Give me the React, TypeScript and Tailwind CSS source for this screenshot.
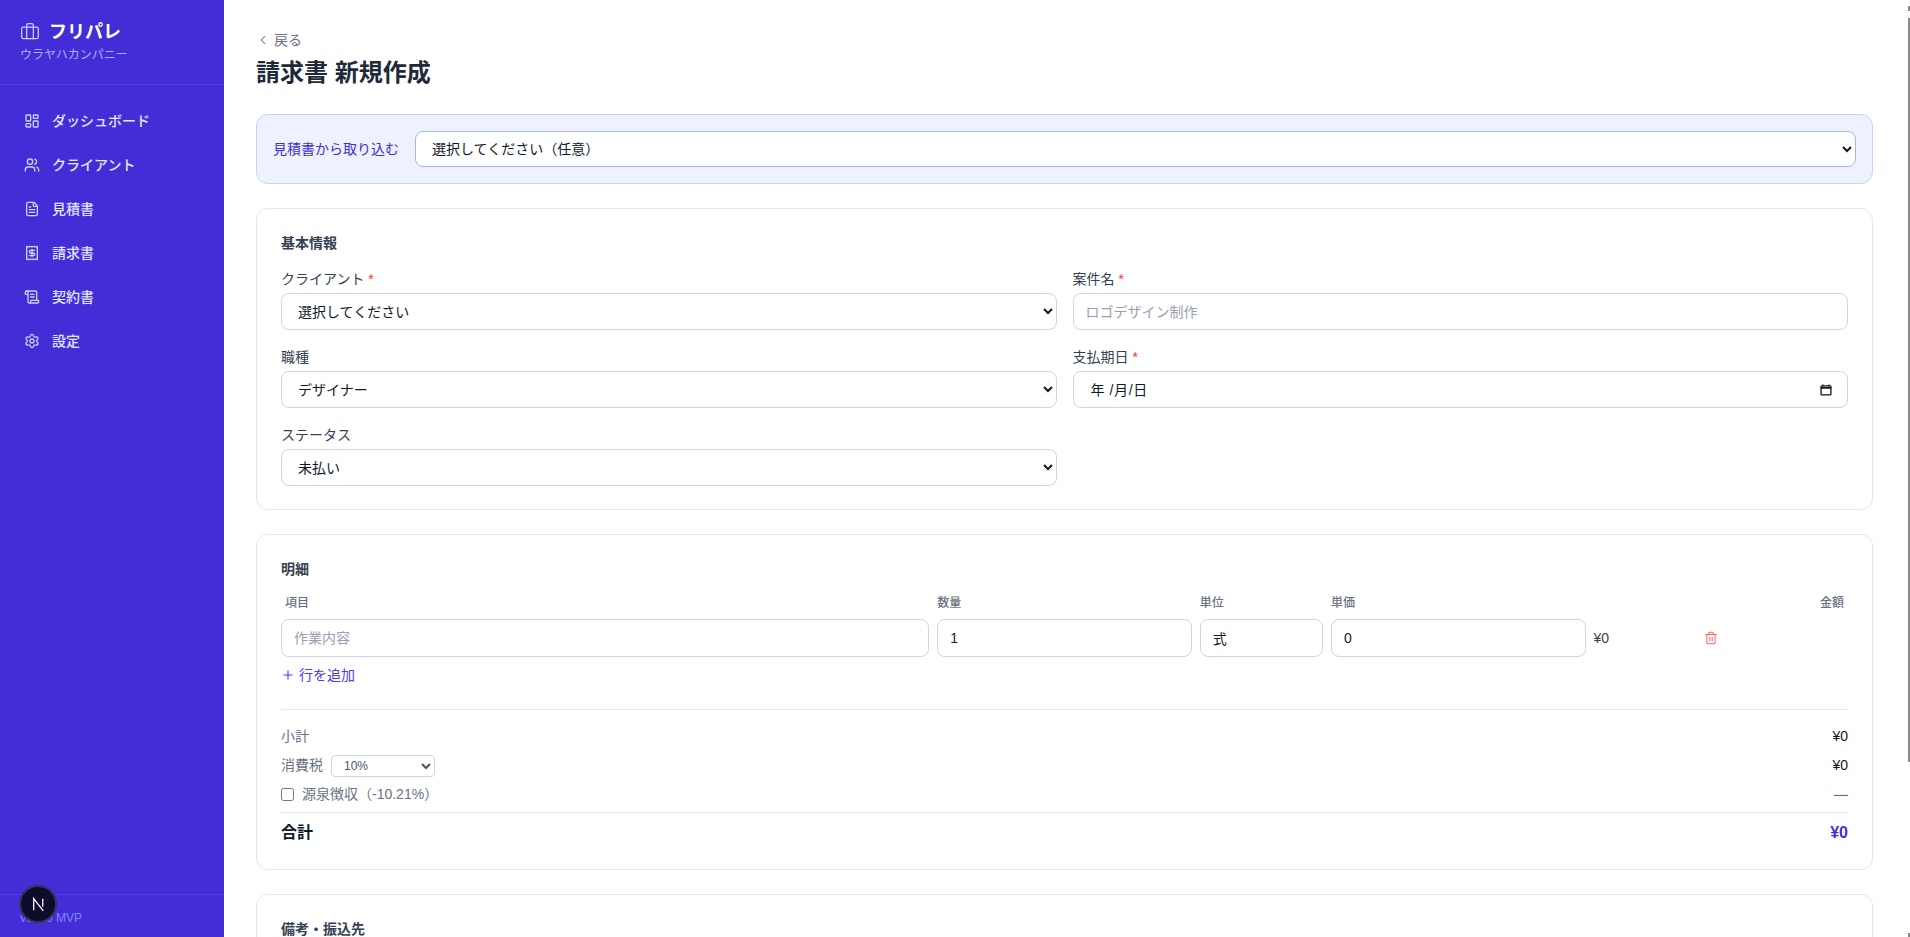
import React from 'react';
import { Briefcase, LayoutDashboard, Users, FileText, Receipt, ScrollText, Settings, ChevronLeft, Plus, Trash2 } from 'lucide-react';

const navItems = [
  { label: 'ダッシュボード', icon: LayoutDashboard },
  { label: 'クライアント', icon: Users },
  { label: '見積書', icon: FileText },
  { label: '請求書', icon: Receipt },
  { label: '契約書', icon: ScrollText },
  { label: '設定', icon: Settings },
];

const fieldClass = 'w-full h-[37px] rounded-lg border border-[#d1d5e3] bg-white px-3 text-sm text-gray-900 placeholder:text-gray-400';

const Label = ({ text, required }: { text: string; required?: boolean }) => (
  <label className="mb-1 block h-5 text-sm leading-5 text-gray-700">
    {text}
    {required && <span className="text-red-500"> *</span>}
  </label>
);

const Sidebar = () => (
  <aside className="relative flex h-full w-56 shrink-0 flex-col bg-indigo-700">
    <div className="h-[85px] shrink-0 border-b border-indigo-600 pl-5 pt-[20px]">
      <div className="flex h-6 items-center gap-[9px]">
        <Briefcase className="h-5 w-5 text-indigo-200" strokeWidth={1.5} />
        <span className="text-lg font-bold leading-6 text-white">フリパレ</span>
      </div>
      <p className="mt-[3px] text-xs leading-4 text-indigo-300">ウラヤハカンパニー</p>
    </div>
    <nav className="flex flex-1 flex-col gap-2 px-3 pt-[18px]">
      {navItems.map((item) => (
        <a key={item.label} className="flex h-9 items-center gap-3 rounded-lg px-3 text-sm font-medium text-indigo-100">
          <item.icon className="h-4 w-4 text-indigo-200" strokeWidth={2} />
          {item.label}
        </a>
      ))}
    </nav>
    <div className="h-[43px] shrink-0 border-t border-indigo-600 pl-5 pt-[15px] text-xs leading-4 text-indigo-400">v0.1.0 MVP</div>
    {/* dev indicator */}
    <div className="absolute bottom-[14px] left-[19px] flex h-[38px] w-[38px] items-center justify-center rounded-full border-2 border-[#34325a] bg-[#0e0b2b]">
      <svg viewBox="0 0 16 16" className="h-[17px] w-[17px]" fill="none" stroke="white" strokeWidth="1.2">
        <path d="M3.5 13.5V2.5l9 11.5" />
        <path d="M12 2.5v7.5" />
      </svg>
    </div>
  </aside>
);

const ImportCard = () => (
  <div className="flex h-[70px] shrink-0 items-center gap-4 rounded-xl border border-indigo-200 bg-indigo-50 px-4">
    <span className="whitespace-nowrap text-sm text-indigo-700">見積書から取り込む</span>
    <select className="h-9 flex-1 rounded-lg border border-indigo-300 bg-white px-3 text-sm text-gray-900">
      <option>選択してください（任意）</option>
    </select>
  </div>
);

const BasicInfo = () => (
  <section className="h-[302px] shrink-0 rounded-xl border border-gray-200 bg-white p-6">
    <h2 className="mb-4 h-5 text-sm font-semibold leading-5 text-gray-700">基本情報</h2>
    <div className="grid grid-cols-2 gap-x-4 gap-y-[17px]">
      <div>
        <Label text="クライアント" required />
        <select className={fieldClass}><option>選択してください</option></select>
      </div>
      <div>
        <Label text="案件名" required />
        <input className={fieldClass} placeholder="ロゴデザイン制作" />
      </div>
      <div>
        <Label text="職種" />
        <select className={fieldClass}><option>デザイナー</option></select>
      </div>
      <div>
        <Label text="支払期日" required />
        <div className={`${fieldClass} flex items-center justify-between pr-[15px]`}>
          <span className="pl-[5px] tracking-[0.6px]">年 /月/日</span>
          <svg viewBox="0 0 14 14" className="h-3 w-3" fill="none">
            <path d="M3.5 0.5v2M10.5 0.5v2" stroke="#111" strokeWidth="1.5" />
            <rect x="1.25" y="2.25" width="11.5" height="10.5" rx="1" stroke="#111" strokeWidth="1.5" />
            <path d="M1 4.5h12" stroke="#111" strokeWidth="2" />
          </svg>
        </div>
      </div>
      <div>
        <Label text="ステータス" />
        <select className={fieldClass}><option>未払い</option></select>
      </div>
    </div>
  </section>
);

const LineItems = () => (
  <section className="h-[336px] shrink-0 rounded-xl border border-gray-200 bg-white p-6">
    <h2 className="mb-4 h-5 text-sm font-semibold leading-5 text-gray-700">明細</h2>
    <div className="mb-2 grid h-4 grid-cols-12 gap-2 text-xs font-medium leading-4 text-gray-500">
      <span className="col-span-5 pl-1">項目</span>
      <span className="col-span-2">数量</span>
      <span className="col-span-1">単位</span>
      <span className="col-span-2">単価</span>
      <span className="col-span-2 pr-1 text-right">金額</span>
    </div>
    <div className="grid grid-cols-12 gap-2">
      <input className={`${fieldClass} col-span-5 h-[38px]`} placeholder="作業内容" />
      <input className={`${fieldClass} col-span-2 h-[38px]`} defaultValue="1" />
      <input className={`${fieldClass} col-span-1 h-[38px]`} defaultValue="式" />
      <input className={`${fieldClass} col-span-2 h-[38px]`} defaultValue="0" />
      <div className="col-span-2 flex items-center text-sm text-gray-700">
        <span className="w-[110px]">¥0</span>
        <Trash2 className="h-[14px] w-[14px] text-red-400" strokeWidth={1.75} />
      </div>
    </div>
    <button className="mt-2 flex h-5 items-center gap-1 text-sm leading-5 text-indigo-600">
      <Plus className="h-[14px] w-[14px]" strokeWidth={2} />
      行を追加
    </button>
    <div className="mt-6 border-t border-gray-200 pt-4">
      <div className="flex flex-col gap-2 pb-[7px] text-sm leading-[21px] text-gray-500">
        <div className="flex h-[21px] items-center justify-between">
          <span>小計</span>
          <span className="text-gray-900">¥0</span>
        </div>
        <div className="flex h-[21px] items-center justify-between">
          <div className="flex items-center gap-2">
            <span>消費税</span>
            <select className="h-[22px] w-[104px] rounded border border-[#d1d5e3] bg-white px-2 text-xs text-gray-600">
              <option>10%</option>
            </select>
          </div>
          <span className="text-gray-900">¥0</span>
        </div>
        <div className="flex h-[21px] items-center justify-between">
          <label className="flex items-center gap-2">
            <input type="checkbox" className="m-0 h-[13px] w-[13px]" />
            源泉徴収（-10.21%）
          </label>
          <span className="text-red-500">—</span>
        </div>
      </div>
      <div className="flex items-center justify-between border-t border-gray-200 pt-2 text-base font-bold leading-6 text-gray-900">
        <span>合計</span>
        <span className="text-indigo-700">¥0</span>
      </div>
    </div>
  </section>
);

const Notes = () => (
  <section className="shrink-0 rounded-xl border border-gray-200 bg-white p-6 pb-40">
    <h2 className="h-5 text-sm font-semibold leading-5 text-gray-700">備考・振込先</h2>
  </section>
);

export default function App() {
  return (
    <div className="flex h-[937px] overflow-hidden bg-white font-['Liberation_Sans','Noto_Sans_CJK_JP',sans-serif]">
      <Sidebar />
      <main className="relative flex min-w-0 flex-1 flex-col overflow-hidden pl-8 pr-[37px] pt-[30px]">
        <a className="flex h-5 items-center gap-1 text-sm leading-5 text-gray-500">
          <ChevronLeft className="h-[14px] w-[14px]" strokeWidth={1.75} />
          戻る
        </a>
        <h1 className="mb-[25px] mt-[7px] h-8 text-2xl font-bold leading-8 text-gray-800">請求書 新規作成</h1>
        <div className="flex flex-col gap-6">
          <ImportCard />
          <BasicInfo />
          <LineItems />
          <Notes />
        </div>
        {/* window scrollbar */}
        <div className="absolute right-0 top-[18px] h-[744px] w-[2px] bg-[#8a8a8a]" />
        <div className="absolute right-0 top-[6px] h-[5px] w-[2px] bg-[#8a8a8a]" />
        <div className="absolute bottom-0 right-0 h-[4px] w-[2px] bg-[#8a8a8a]" />
      </main>
    </div>
  );
}
